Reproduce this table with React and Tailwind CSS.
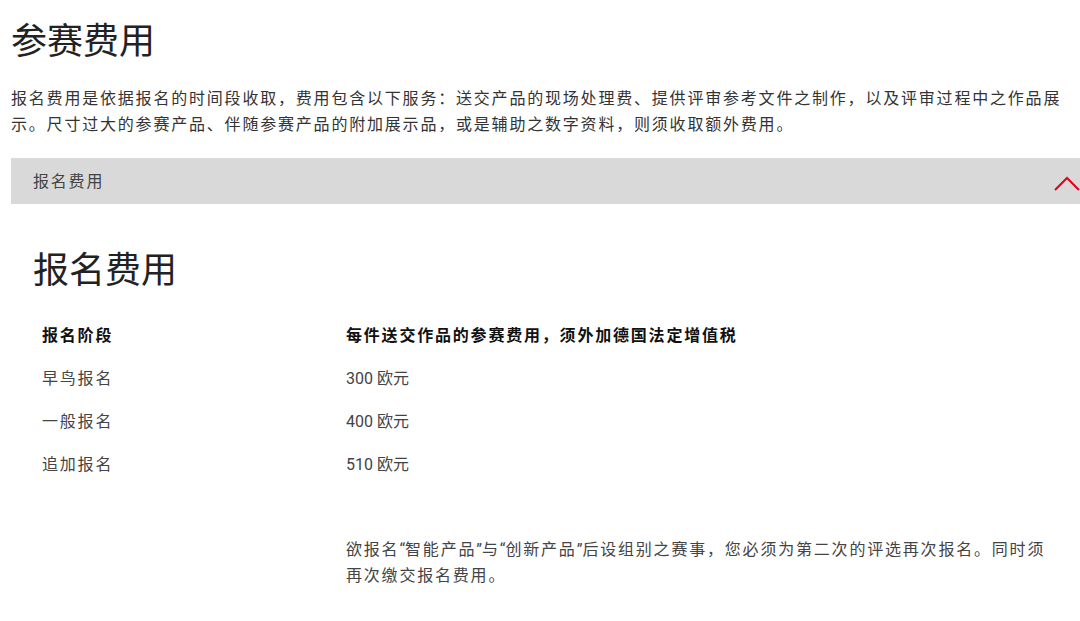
export default function App() {
  const stufen = [
    { name: "早鸟报名", preis: "300 欧元" },
    { name: "一般报名", preis: "400 欧元" },
    { name: "追加报名", preis: "510 欧元" },
  ];

  return (
    <div
      className="w-full h-[621px] overflow-hidden bg-white text-[#333]"
      style={{ fontFamily: "Roboto, 'Noto Sans CJK SC', sans-serif" }}
    >
      <div className="pl-[11px] w-[1080px]">
        <h1 className="mt-[20px] h-[44px] leading-[44px] text-[36px] font-normal text-[#222]">
          参赛费用
        </h1>
        <p className="mt-[22px] w-[1059px] text-[16px] leading-[26px] tracking-[1.8px]">
          报名费用是依据报名的时间段收取，费用包含以下服务：送交产品的现场处理费、提供评审参考文件之制作，以及评审过程中之作品展示。尺寸过大的参赛产品、伴随参赛产品的附加展示品，或是辅助之数字资料，则须收取额外费用。
        </p>

        <div className="mt-[20px] h-[46px] bg-[#d9d9d9] flex items-center justify-between pl-[22px]">
          <span className="text-[16px] tracking-[1.8px] text-[#444] mt-[2px]">报名费用</span>
          <svg width="26" height="15" viewBox="0 0 26 15" className="mt-[4px]">
            <polyline
              points="1,14 13,2 25,14"
              fill="none"
              stroke="#e2001a"
              strokeWidth="2"
            />
          </svg>
        </div>

        <section className="pl-[22px]">
          <h2 className="mt-[45px] h-[44px] leading-[44px] text-[36px] font-normal text-[#222]">
            报名费用
          </h2>
          <div className="mt-[21px] ml-[9px] w-[1006px] grid grid-cols-[304px_1fr] text-[16px] tracking-[1.8px]">
            <div className="h-[43px] flex items-center font-bold text-[#111]">报名阶段</div>
            <div className="h-[43px] flex items-center font-bold text-[#111]">
              每件送交作品的参赛费用，须外加德国法定增值税
            </div>
            {stufen.map((s) => (
              <div key={s.name} className="contents">
                <div className="h-[43px] flex items-center text-[#444]">{s.name}</div>
                <div className="h-[43px] flex items-center text-[#444] tracking-normal">
                  {s.preis}
                </div>
              </div>
            ))}
            <div />
            <p className="mt-[51px] leading-[26px] text-[#444]">
              欲报名<span className="font-[Roboto] tracking-normal">“</span>智能产品<span className="font-[Roboto] tracking-normal">”</span>与<span className="font-[Roboto] tracking-normal">“</span>创新产品<span className="font-[Roboto] tracking-normal">”</span>后设组别之赛事，您必须为第二次的评选再次报名。同时须再次缴交报名费用。
            </p>
          </div>
        </section>
      </div>
    </div>
  );
}
